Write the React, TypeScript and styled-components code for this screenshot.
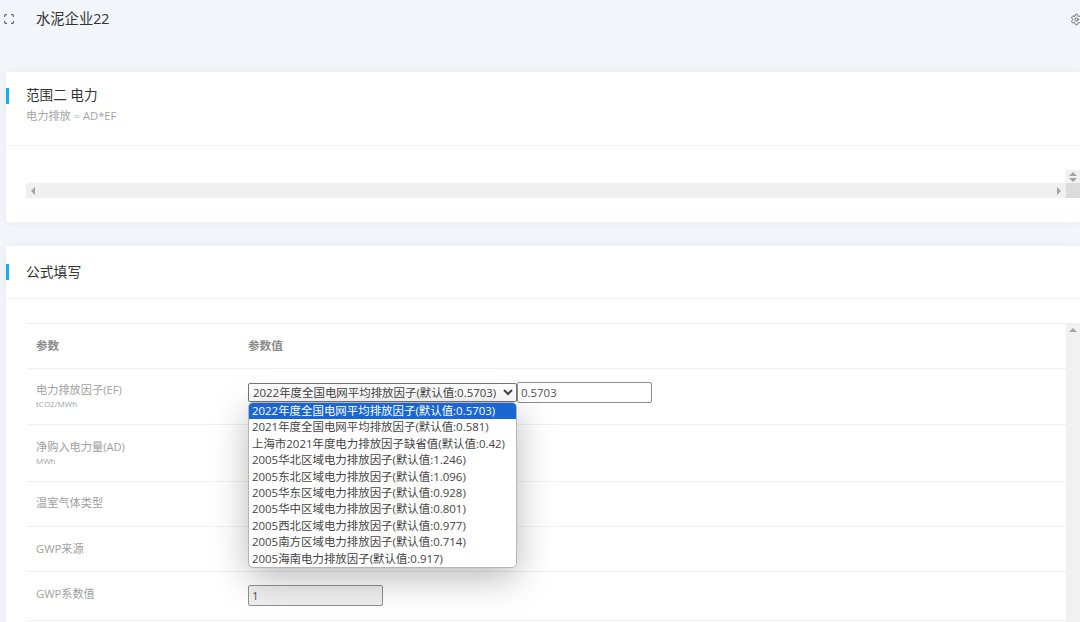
import React from "react";
import styled, { createGlobalStyle } from "styled-components";
import { Settings } from "lucide-react";

const Global = createGlobalStyle`
  html, body { margin: 0; padding: 0; background: #f2f5f9; }
  body { font-family: "Open Sans", "Noto Sans CJK SC", sans-serif; overflow: hidden; }
  #root { width: 1080px; height: 622px; overflow: hidden; }
`;

const Page = styled.div`
  width: 1080px;
  height: 622px;
  overflow: hidden;
  background: #f2f5f9;
`;
const TopBar = styled.header`
  height: 38px;
  padding: 0 0 34px 4px;
  display: flex;
  align-items: center;
  overflow: hidden;
`;
const Title = styled.h1`
  margin: -3px 0 0 22px;
  font-size: 14.3px;
  font-weight: 400;
  color: #333;
  flex: 1;
`;
const GearSlot = styled.div`
  width: 10px;
  height: 13px;
  color: #555;
  display: flex;
  svg { flex: none; }
`;
const Card = styled.section<{ $mt?: number; $h: number }>`
  margin: ${(p) => p.$mt ?? 0}px 0 0 6px;
  height: ${(p) => p.$h}px;
  background: #fff;
  box-shadow: 0 0 10px rgba(60, 80, 100, 0.05);
`;
const CardHead = styled.div<{ $h: number }>`
  height: ${(p) => p.$h}px;
  box-sizing: content-box;
  border-bottom: 1px solid #f3f4f6;
  position: relative;
  display: flex;
  flex-direction: column;
  justify-content: flex-start;
  padding-left: 20px;
`;
const Accent = styled.i<{ $top: number }>`
  position: absolute;
  left: 0;
  top: ${(p) => p.$top}px;
  width: 3px;
  height: 16px;
  background: #0bb0f7;
`;
const CardTitle = styled.h2<{ $top: number; $size: number }>`
  margin: ${(p) => p.$top}px 0 0;
  font-size: ${(p) => p.$size}px;
  line-height: 20px;
  font-weight: 400;
  color: #333;
`;
const CardSub = styled.div`
  font-size: 11.2px;
  line-height: 16px;
  margin-top: 3px;
  color: #a3a3a3;
`;
const ScrollBody = styled.div`
  padding: 24px 0 0 20px;
  display: flex;
  align-items: flex-end;
`;
const HTrack = styled.div`
  width: 1040px;
  height: 15px;
  background: #f0f0f0;
  display: flex;
  align-items: center;
  justify-content: space-between;
  padding: 0 5px;
  box-sizing: border-box;
`;
const Corner = styled.div`
  width: 14px;
  display: flex;
  flex-direction: column;
`;
const CornerTop = styled.div`
  height: 13px;
  background: #f1f1f1;
  display: flex;
  flex-direction: column;
  align-items: center;
  justify-content: center;
  gap: 2px;
`;
const CornerFill = styled.div`
  height: 15px;
  background: #dcdcdc;
`;
const Tri = styled.i<{ $dir: "up" | "down" | "left" | "right" }>`
  display: block;
  width: 0;
  height: 0;
  border-style: solid;
  border-color: transparent;
  ${(p) =>
    p.$dir === "up"
      ? "border-width: 0 4px 4px; border-bottom-color: #a3a3a3;"
      : p.$dir === "down"
      ? "border-width: 4px 4px 0; border-top-color: #a3a3a3;"
      : p.$dir === "left"
      ? "border-width: 4px 4px 4px 0; border-right-color: #a3a3a3;"
      : "border-width: 4px 0 4px 4px; border-left-color: #a3a3a3;"}
`;
const TableWrap = styled.div`
  padding: 24px 0 0 20px;
  display: flex;
  align-items: stretch;
`;
const Table = styled.div`
  width: 1040px;
  border-top: 1px solid #eceef0;
`;
const VTrack = styled.div`
  width: 14px;
  background: #f1f1f1;
  display: flex;
  justify-content: center;
  padding-top: 5px;
  height: 320px;
`;
const Row = styled.div<{ $h: number }>`
  height: ${(p) => p.$h}px;
  box-sizing: border-box;
  border-bottom: 1px solid #eef0f2;
  display: grid;
  grid-template-columns: 212px 1fr;
  padding: 13px 0 0 10px;
`;
const HeadCell = styled.div`
  font-size: 11.6px;
  line-height: 16px;
  margin-top: 1px;
  font-weight: 600;
  color: #8c8c8c;
`;
const Label = styled.div<{ $nudge?: number }>`
  font-size: 11.2px;
  line-height: 16px;
  margin-top: ${(p) => p.$nudge ?? 0}px;
  color: #a0a0a0;
`;
const Unit = styled.div`
  font-size: 8px;
  line-height: 12px;
  color: #a0a0a0;
`;
const ValueCell = styled.div`
  position: relative;
  display: flex;
  align-items: center;
  height: 21px;
  align-self: start;
`;
const Select = styled.select`
  width: 269px;
  height: 19px;
  box-sizing: border-box;
  margin: 0;
  padding: 0;
  border: 1px solid #767676;
  border-radius: 2px;
  background: #fff;
  color: #444;
  font: 400 11.45px "Open Sans", "Noto Sans CJK SC", sans-serif;
`;
const TextInput = styled.input<{ $w: number }>`
  width: ${(p) => p.$w}px;
  height: 21px;
  box-sizing: border-box;
  margin: 0;
  padding: 0 3px 1px;
  border: 1px solid #8f8f8f;
  border-radius: 2px;
  background: ${(p) => (p.disabled ? "#efefef" : "#fff")};
  color: #555;
  font: 400 11.45px "Open Sans", "Noto Sans CJK SC", sans-serif;
`;
const Dropdown = styled.ul`
  position: absolute;
  left: 0;
  top: 20px;
  z-index: 5;
  margin: 0;
  padding: 0;
  list-style: none;
  width: 269px;
  height: 166px;
  box-sizing: border-box;
  background: #fff;
  border: 1px solid #b5b5b5;
  border-radius: 5px;
  overflow: hidden;
  box-shadow: 0 10px 36px rgba(0, 0, 0, 0.28);
`;
const Option = styled.li<{ $on?: boolean }>`
  height: 16.4px;
  line-height: 16.4px;
  padding-left: 3px;
  white-space: nowrap;
  font-size: 11.45px;
  color: ${(p) => (p.$on ? "#fff" : "#444")};
  background: ${(p) => (p.$on ? "#1a66d2" : "transparent")};
`;

const factors = [
  "2022年度全国电网平均排放因子(默认值:0.5703)",
  "2021年度全国电网平均排放因子(默认值:0.581)",
  "上海市2021年度电力排放因子缺省值(默认值:0.42)",
  "2005华北区域电力排放因子(默认值:1.246)",
  "2005东北区域电力排放因子(默认值:1.096)",
  "2005华东区域电力排放因子(默认值:0.928)",
  "2005华中区域电力排放因子(默认值:0.801)",
  "2005西北区域电力排放因子(默认值:0.977)",
  "2005南方区域电力排放因子(默认值:0.714)",
  "2005海南电力排放因子(默认值:0.917)",
];

const FullscreenIcon = () => (
  <svg width="10" height="10" viewBox="0 0 10 10" fill="none" stroke="#666" strokeWidth="1.2">
    <path d="M.6 3V1.6a1 1 0 0 1 1-1H3M7 .6h1.4a1 1 0 0 1 1 1V3M9.4 7v1.4a1 1 0 0 1-1 1H7M3 9.4H1.6a1 1 0 0 1-1-1V7" />
  </svg>
);

export default function App() {
  return (
    <Page>
      <Global />
      <TopBar>
        <FullscreenIcon />
        <Title>水泥企业22</Title>
        <GearSlot>
          <Settings size={13} strokeWidth={1.6} />
        </GearSlot>
      </TopBar>

      <Card $h={150}>
        <CardHead $h={73}>
          <Accent $top={16} />
          <CardTitle $top={13} $size={13.6}>范围二 电力</CardTitle>
          <CardSub>电力排放 = AD*EF</CardSub>
        </CardHead>
        <ScrollBody>
          <HTrack>
            <Tri $dir="left" />
            <Tri $dir="right" />
          </HTrack>
          <Corner>
            <CornerTop>
              <Tri $dir="up" />
              <Tri $dir="down" />
            </CornerTop>
            <CornerFill />
          </Corner>
        </ScrollBody>
      </Card>

      <Card $mt={24} $h={400}>
        <CardHead $h={52}>
          <Accent $top={18} />
          <CardTitle $top={16} $size={13.8}>公式填写</CardTitle>
        </CardHead>
        <TableWrap>
          <Table>
            <Row $h={45}>
              <HeadCell>参数</HeadCell>
              <HeadCell>参数值</HeadCell>
            </Row>
            <Row $h={56}>
              <div>
                <Label>电力排放因子(EF)</Label>
                <Unit>tCO2/MWh</Unit>
              </div>
              <ValueCell>
                <Select defaultValue={factors[0]}>
                  {factors.map((f) => (
                    <option key={f}>{f}</option>
                  ))}
                </Select>
                <TextInput $w={135} defaultValue="0.5703" />
                <Dropdown>
                  {factors.map((f, i) => (
                    <Option key={f} $on={i === 0}>
                      {f}
                    </Option>
                  ))}
                </Dropdown>
              </ValueCell>
            </Row>
            <Row $h={57}>
              <div>
                <Label $nudge={1}>净购入电力量(AD)</Label>
                <Unit>MWh</Unit>
              </div>
              <ValueCell>
                <TextInput $w={135} />
              </ValueCell>
            </Row>
            <Row $h={45}>
              <Label>温室气体类型</Label>
            </Row>
            <Row $h={45}>
              <Label $nudge={1}>GWP来源</Label>
              <ValueCell>
                <TextInput $w={135} />
              </ValueCell>
            </Row>
            <Row $h={49}>
              <Label $nudge={1}>GWP系数值</Label>
              <ValueCell>
                <TextInput $w={135} disabled defaultValue="1" />
              </ValueCell>
            </Row>
          </Table>
          <VTrack>
            <Tri $dir="up" />
          </VTrack>
        </TableWrap>
      </Card>
    </Page>
  );
}
